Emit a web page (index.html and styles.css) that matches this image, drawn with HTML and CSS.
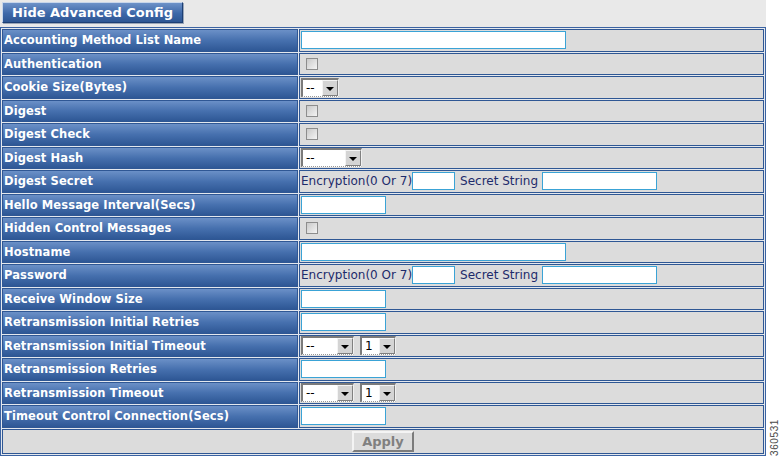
FILE: index.html
```html
<!DOCTYPE html>
<html>
<head>
<meta charset="utf-8">
<link rel="stylesheet" href="styles.css">
</head>
<body>
<div class="page">
  <div class="topbar"><button class="hide-btn">Hide Advanced Config</button></div>
  <table class="cfg">
    <tr><td class="lbl">Accounting Method List Name</td><td class="val"><span class="txt long"></span></td></tr>
    <tr><td class="lbl">Authentication</td><td class="val"><span class="chk"></span></td></tr>
    <tr class="selrow"><td class="lbl">Cookie Size(Bytes)</td><td class="val"><span class="sel w38"><span class="sv">--</span><span class="arr"></span></span></td></tr>
    <tr><td class="lbl">Digest</td><td class="val"><span class="chk"></span></td></tr>
    <tr><td class="lbl">Digest Check</td><td class="val"><span class="chk"></span></td></tr>
    <tr class="selrow"><td class="lbl">Digest Hash</td><td class="val"><span class="sel w61"><span class="sv">--</span><span class="arr"></span></span></td></tr>
    <tr><td class="lbl">Digest Secret</td><td class="val"><span class="pair"><span class="plain">Encryption(0 Or 7)</span><span class="txt enc"></span><span class="plain sp">Secret String</span><span class="txt sec"></span></span></td></tr>
    <tr><td class="lbl">Hello Message Interval(Secs)</td><td class="val"><span class="txt short"></span></td></tr>
    <tr><td class="lbl">Hidden Control Messages</td><td class="val"><span class="chk"></span></td></tr>
    <tr><td class="lbl">Hostname</td><td class="val"><span class="txt long"></span></td></tr>
    <tr><td class="lbl">Password</td><td class="val"><span class="pair"><span class="plain">Encryption(0 Or 7)</span><span class="txt enc"></span><span class="plain sp">Secret String</span><span class="txt sec"></span></span></td></tr>
    <tr><td class="lbl">Receive Window Size</td><td class="val"><span class="txt short"></span></td></tr>
    <tr><td class="lbl">Retransmission Initial Retries</td><td class="val"><span class="txt short"></span></td></tr>
    <tr class="selrow"><td class="lbl">Retransmission Initial Timeout</td><td class="val"><span class="pair"><span class="sel w53"><span class="sv">--</span><span class="arr"></span></span><span class="sel w36 gap"><span class="sv">1</span><span class="arr"></span></span></span></td></tr>
    <tr><td class="lbl">Retransmission Retries</td><td class="val"><span class="txt short"></span></td></tr>
    <tr class="selrow"><td class="lbl">Retransmission Timeout</td><td class="val"><span class="pair"><span class="sel w53"><span class="sv">--</span><span class="arr"></span></span><span class="sel w36 gap"><span class="sv">1</span><span class="arr"></span></span></span></td></tr>
    <tr><td class="lbl">Timeout Control Connection(Secs)</td><td class="val"><span class="txt short"></span></td></tr>
    <tr><td class="applycell" colspan="2"><button class="apply-btn">Apply</button></td></tr>
  </table>
</div>
<div class="figid">360531</div>
</body>
</html>
```
FILE: styles.css
```css
html, body {
  margin: 0;
  padding: 0;
  background: #ffffff;
}
body {
  font-family: "DejaVu Sans", Verdana, sans-serif;
  position: relative;
  width: 780px;
  height: 457px;
  overflow: hidden;
}
.page {
  width: 766px;
  background: #e9e9e9;
}
.topbar {
  padding: 2px 0 0 2px;
  height: 27px;
  box-sizing: border-box;
}
.hide-btn {
  display: block;
  width: 181px;
  height: 21px;
  margin: 0;
  padding: 0 0 1px 0;
  font-family: "DejaVu Sans", Verdana, sans-serif;
  font-weight: bold;
  font-size: 13px;
  color: #ffffff;
  background: linear-gradient(#6d92c8, #3e68a8 55%, #2d5693);
  border: 1px solid;
  border-color: #c8d6ea #1d3f74 #1d3f74 #c8d6ea;
  box-shadow: 1px 1px 0 #9aa6b8;
  text-align: center;
}
.cfg {
  box-sizing: border-box;
  width: 766px;
  max-width: 766px;
  table-layout: fixed;
  border-collapse: separate;
  border-spacing: 1px;
  border: 1px solid #3b63a2;
  background: #e4e8ee;
  margin: 0;
}
.cfg td {
  padding: 0;
  box-sizing: border-box;
  height: 22.5px;
  border: 1px solid #2f5794;
  vertical-align: middle;
  overflow: hidden;
}
.lbl {
  width: 296px;
  background: linear-gradient(#6b90c7, #4670ae 50%, #2e5795);
  color: #ffffff;
  font-weight: bold;
  font-size: 11.5px;
  padding-left: 1px !important;
  white-space: nowrap;
  letter-spacing: 0.1px;
}
.val {
  background: #dcdcdc;
  padding-left: 1px !important;
}
.txt {
  display: block;
  height: 18px;
  box-sizing: border-box;
  background: #ffffff;
  border: 1px solid #3aa3d6;
  box-shadow: inset 0 0 0 1px #ffffff;
}
.txt.long { width: 265px; }
.txt.short { width: 85px; }
.txt.enc { width: 43px; display: inline-block; }
.txt.sec { width: 115px; display: inline-block; }
.chk {
  display: block;
  width: 12px;
  height: 12px;
  margin-left: 5px;
  box-sizing: border-box;
  border: 1px solid #8d8d8d;
  background: linear-gradient(135deg, #c9c9c9, #f4f4f4);
}
.pair {
  display: flex;
  align-items: center;
}
.plain {
  font-size: 12px;
  color: #1d2b6b;
  line-height: 18px;
}
.plain.sp { margin: 0 4px 0 5px; }
.sel {
  display: flex;
  height: 19px;
  box-sizing: border-box;
  border-top: 2px solid #7b7b7b;
  border-left: 2px solid #7b7b7b;
  border-right: 1px solid #f0f0f0;
  border-bottom: 1px dotted #9a9a9a;
  background: #ffffff;
}
.sel.gap { margin-left: 6px; }
.w38 { width: 38px; }
.w61 { width: 61px; }
.w53 { width: 53px; }
.w36 { width: 36px; }
.sv {
  flex: 1;
  font-size: 12px;
  line-height: 16px;
  padding-left: 3px;
  color: #000000;
}
.arr {
  width: 16px;
  height: 16px;
  box-sizing: border-box;
  background: #d4d4d4;
  border: 1px solid;
  border-color: #f4f4f4 #808080 #808080 #f4f4f4;
  position: relative;
}
.arr::after {
  content: "";
  position: absolute;
  left: 3px;
  top: 6px;
  border-left: 4px solid transparent;
  border-right: 4px solid transparent;
  border-top: 4px solid #000000;
}
.applycell {
  height: 25px !important;
  background: #dcdcdc;
  text-align: center;
}
.apply-btn {
  width: 62px;
  height: 21px;
  margin: 0;
  padding: 0;
  font-family: "DejaVu Sans", Verdana, sans-serif;
  font-weight: bold;
  font-size: 13px;
  color: #808080;
  background: #dcdcdc;
  border: 2px solid;
  border-color: #f4f4f4 #7c7c7c #7c7c7c #f4f4f4;
}
.figid {
  position: absolute;
  right: 1px;
  bottom: 1px;
  writing-mode: vertical-rl;
  transform: rotate(180deg);
  font-family: "Liberation Sans", Arial, sans-serif;
  font-size: 10px;
  color: #4a4a4a;
  letter-spacing: 0.6px;
  line-height: 9px;
}
```
